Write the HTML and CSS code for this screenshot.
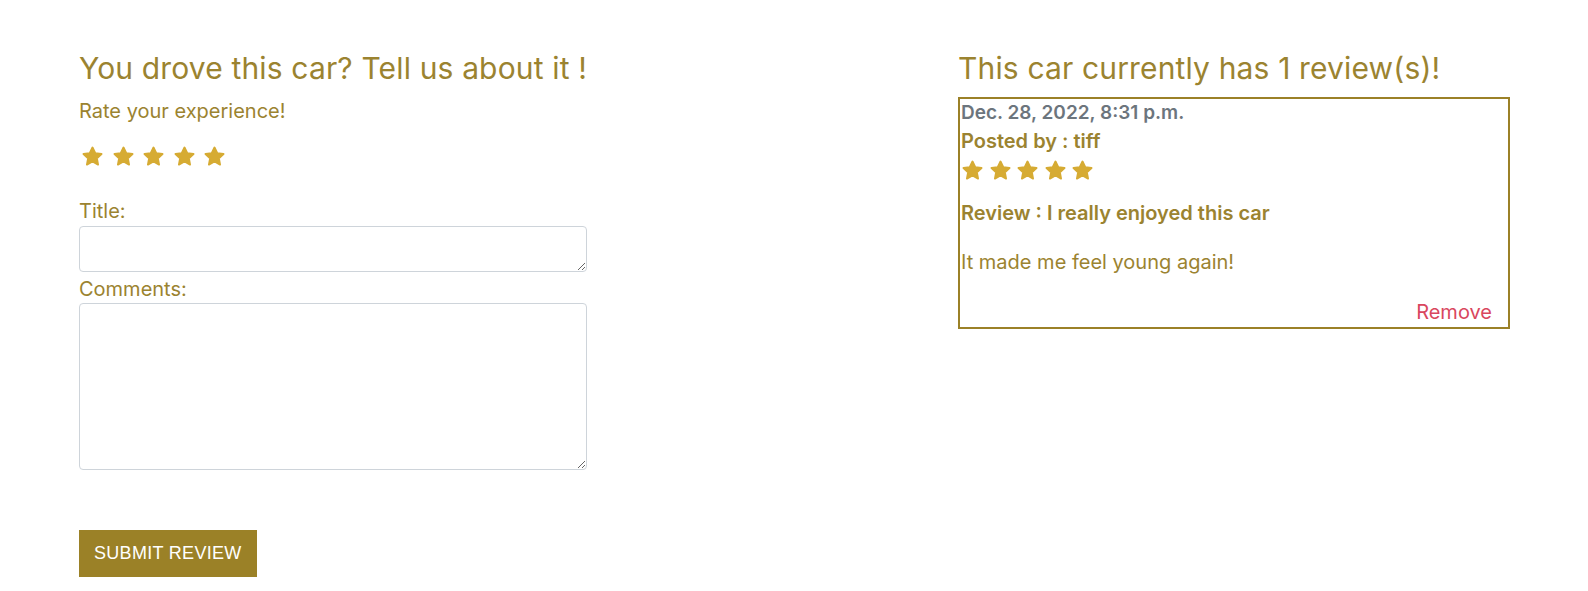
FILE: index.html
```html
<!DOCTYPE html>
<html lang="en">
<head>
<meta charset="utf-8">
<title>Reviews</title>
<link rel="stylesheet" href="styles.css">
</head>
<body>
<div class="page">
  <section class="form-col">
    <h2 class="heading">You drove this car? Tell us about it !</h2>
    <p class="rate">Rate your experience!</p>
    <div class="stars stars-lg">
      <svg viewBox="0 0 24 24"><path d="M12 2.6l2.9 6 6.5.8-4.8 4.5 1.2 6.5L12 17.2l-5.8 3.2 1.2-6.5-4.8-4.5 6.5-.8z"/></svg>
      <svg viewBox="0 0 24 24"><path d="M12 2.6l2.9 6 6.5.8-4.8 4.5 1.2 6.5L12 17.2l-5.8 3.2 1.2-6.5-4.8-4.5 6.5-.8z"/></svg>
      <svg viewBox="0 0 24 24"><path d="M12 2.6l2.9 6 6.5.8-4.8 4.5 1.2 6.5L12 17.2l-5.8 3.2 1.2-6.5-4.8-4.5 6.5-.8z"/></svg>
      <svg viewBox="0 0 24 24"><path d="M12 2.6l2.9 6 6.5.8-4.8 4.5 1.2 6.5L12 17.2l-5.8 3.2 1.2-6.5-4.8-4.5 6.5-.8z"/></svg>
      <svg viewBox="0 0 24 24"><path d="M12 2.6l2.9 6 6.5.8-4.8 4.5 1.2 6.5L12 17.2l-5.8 3.2 1.2-6.5-4.8-4.5 6.5-.8z"/></svg>
    </div>
    <form class="review-form">
      <label class="field-label label-title" for="title">Title:</label>
      <textarea id="title" class="field field-title"></textarea>
      <label class="field-label label-comments" for="comments">Comments:</label>
      <textarea id="comments" class="field field-comments"></textarea>
      <button type="button" class="submit-btn">SUBMIT REVIEW</button>
    </form>
  </section>
  <section class="reviews-col">
    <h2 class="heading">This car currently has 1 review(s)!</h2>
    <article class="review-card">
      <p class="review-date">Dec. 28, 2022, 8:31 p.m.</p>
      <p class="review-author">Posted by : tiff</p>
      <div class="stars stars-sm">
        <svg viewBox="0 0 24 24"><path d="M12 2.6l2.9 6 6.5.8-4.8 4.5 1.2 6.5L12 17.2l-5.8 3.2 1.2-6.5-4.8-4.5 6.5-.8z"/></svg>
        <svg viewBox="0 0 24 24"><path d="M12 2.6l2.9 6 6.5.8-4.8 4.5 1.2 6.5L12 17.2l-5.8 3.2 1.2-6.5-4.8-4.5 6.5-.8z"/></svg>
        <svg viewBox="0 0 24 24"><path d="M12 2.6l2.9 6 6.5.8-4.8 4.5 1.2 6.5L12 17.2l-5.8 3.2 1.2-6.5-4.8-4.5 6.5-.8z"/></svg>
        <svg viewBox="0 0 24 24"><path d="M12 2.6l2.9 6 6.5.8-4.8 4.5 1.2 6.5L12 17.2l-5.8 3.2 1.2-6.5-4.8-4.5 6.5-.8z"/></svg>
        <svg viewBox="0 0 24 24"><path d="M12 2.6l2.9 6 6.5.8-4.8 4.5 1.2 6.5L12 17.2l-5.8 3.2 1.2-6.5-4.8-4.5 6.5-.8z"/></svg>
      </div>
      <p class="review-title">Review : I really enjoyed this car</p>
      <p class="review-body">It made me feel young again!</p>
      <div class="review-actions"><a href="#" class="remove-link">Remove</a></div>
    </article>
  </section>
</div>
</body>
</html>
```
FILE: styles.css
```css
* { box-sizing: border-box; }
body {
  margin: 0;
  background: #fff;
  font-family: Inter, "DejaVu Sans", sans-serif;
  color: #9b8330;
}
.page {
  display: grid;
  grid-template-columns: 508px 552px;
  column-gap: 371px;
  padding: 50px 0 0 79px;
  align-items: start;
}
.heading {
  margin: 0 0 11px;
  font-size: 30px;
  line-height: 36px;
  font-weight: 400;
  letter-spacing: 0.15px;
  color: #9b8330;
}
.rate {
  margin: 0;
  font-size: 20px;
  line-height: 28px;
}
.stars {
  display: flex;
  height: 23px;
}
.stars svg {
  width: 23px;
  height: 23px;
  fill: #d6ab33;
  stroke: #d6ab33;
  stroke-width: 2;
  stroke-linejoin: round;
}
.stars-lg { margin: 20px 0 0 2px; gap: 7.5px; }
.stars-sm { margin: 4px 0 0 0; gap: 4.5px; }
.review-form {
  display: flex;
  flex-direction: column;
  align-items: flex-start;
  margin-top: 30px;
}
.field-label {
  font-size: 20px;
  line-height: 26px;
}
.field {
  display: block;
  width: 508px;
  border: 1px solid #ced4da;
  border-radius: 4px;
  font: inherit;
  padding: 6px 12px;
  background: #fff;
}
.field-title { height: 46px; margin-top: 2px; }
.label-comments { margin-top: 4px; }
.field-comments { height: 167px; margin-top: 1px; }
.submit-btn {
  margin-top: 60px;
  height: 47px;
  padding: 0 15px;
  border: 0;
  background: #9b8127;
  color: #fff;
  font-family: "Liberation Sans", Arial, sans-serif;
  font-size: 18px;
  letter-spacing: 0.3px;
}
.review-card {
  border: 2px solid #9b8127;
  padding: 0 16px 1px 1px;
}
.review-card p { margin: 0; font-size: 20px; line-height: 28px; }
.review-card .review-date { color: #6c757d; font-weight: 600; font-size: 19px; }
.review-author { font-weight: 600; }
.review-card .review-title { margin-top: 17px; font-weight: 600; }
.review-card .review-body { margin-top: 21px; }
.review-actions {
  display: flex;
  justify-content: flex-end;
  margin-top: 22px;
  line-height: 28px;
}
.remove-link {
  color: #d9475e;
  text-decoration: none;
  font-size: 20px;
}
```
